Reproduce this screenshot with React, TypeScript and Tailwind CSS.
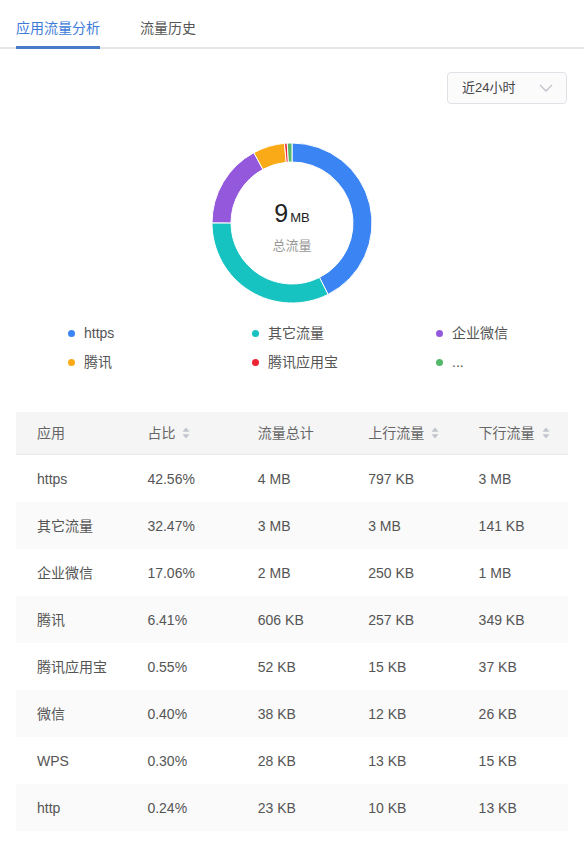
import React from "react";

const segs = [
  { name: "https", pct: 42.56, color: "#3b84f4" },
  { name: "其它流量", pct: 32.47, color: "#16c3c1" },
  { name: "企业微信", pct: 17.06, color: "#9458dd" },
  { name: "腾讯", pct: 6.41, color: "#faaa16" },
  { name: "腾讯应用宝", pct: 0.55, color: "#ec2433" },
  { name: "...", pct: 0.95, color: "#52b96a" },
];

function arcPath(cx: number, cy: number, R: number, r: number, a0: number, a1: number) {
  const p = (rad: number, a: number) => {
    const t = (a - 90) * (Math.PI / 180);
    return [cx + rad * Math.cos(t), cy + rad * Math.sin(t)];
  };
  const large = a1 - a0 > 180 ? 1 : 0;
  const [x0, y0] = p(R, a0);
  const [x1, y1] = p(R, a1);
  const [x2, y2] = p(r, a1);
  const [x3, y3] = p(r, a0);
  return `M${x0} ${y0} A${R} ${R} 0 ${large} 1 ${x1} ${y1} L${x2} ${y2} A${r} ${r} 0 ${large} 0 ${x3} ${y3} Z`;
}

function Donut() {
  const total = segs.reduce((s, x) => s + x.pct, 0);
  let acc = 0;
  return (
    <svg width="162" height="162" viewBox="0 0 162 162">
      {segs.map((s) => {
        const a0 = (acc / total) * 360;
        acc += s.pct;
        const a1 = (acc / total) * 360;
        return (
          <path
            key={s.name}
            d={arcPath(81, 81, 80, 61, a0, a1)}
            fill={s.color}
            stroke="#fff"
            strokeWidth="1"
          />
        );
      })}
    </svg>
  );
}

function Sort() {
  return (
    <svg width="8" height="12" viewBox="0 0 8 12" className="ml-[7px]">
      <path d="M4 0.5 L7.5 4.8 H0.5 Z" fill="#c0c4cc" />
      <path d="M4 11.5 L7.5 7.2 H0.5 Z" fill="#c0c4cc" />
    </svg>
  );
}

const rows = [
  ["https", "42.56%", "4 MB", "797 KB", "3 MB"],
  ["其它流量", "32.47%", "3 MB", "3 MB", "141 KB"],
  ["企业微信", "17.06%", "2 MB", "250 KB", "1 MB"],
  ["腾讯", "6.41%", "606 KB", "257 KB", "349 KB"],
  ["腾讯应用宝", "0.55%", "52 KB", "15 KB", "37 KB"],
  ["微信", "0.40%", "38 KB", "12 KB", "26 KB"],
  ["WPS", "0.30%", "28 KB", "13 KB", "15 KB"],
  ["http", "0.24%", "23 KB", "10 KB", "13 KB"],
];

const headers: [string, boolean][] = [
  ["应用", false],
  ["占比", true],
  ["流量总计", false],
  ["上行流量", true],
  ["下行流量", true],
];

export default function App() {
  return (
    <div
      className="w-[584px] min-h-[853px] bg-white text-[#333]"
      style={{ fontFamily: '"Liberation Sans", "Noto Sans CJK SC", sans-serif' }}
    >
      {/* Tabs */}
      <div className="flex h-[49px] items-stretch border-b-2 border-[#e6e6e6] pl-4">
        <div className="relative flex items-center text-[14px] text-[#3d7bd9] pt-[9px]">
          应用流量分析
          <div className="absolute left-0 right-0 bottom-[-2px] h-[3px] bg-[#4a7bc6]" />
        </div>
        <div className="ml-[40px] flex items-center text-[14px] text-[#555] pt-[9px]">流量历史</div>
      </div>

      <div className="px-4">
        {/* Select */}
        <div className="flex justify-end pt-[23px]">
          <div className="mr-[1px] flex h-[32px] w-[120px] items-center justify-between rounded-[4px] border border-[#dfe1e6] bg-[#fbfbfc] pl-[14px] pr-[13px] text-[13px] text-[#444]">
            <span>近24小时</span>
            <svg width="14" height="8" viewBox="0 0 14 8">
              <path d="M1 1 L7 7 L13 1" fill="none" stroke="#c0c4cc" strokeWidth="1.4" />
            </svg>
          </div>
        </div>

        {/* Donut */}
        <div className="mt-[38px] flex justify-center">
          <div className="relative h-[162px] w-[162px]">
            <Donut />
            <div className="absolute inset-0 flex flex-col items-center justify-center pt-[6px]">
              <div className="flex items-baseline text-[#222]">
                <span className="text-[25px] font-light leading-none">9</span>
                <span className="ml-[2px] text-[13px] leading-none">MB</span>
              </div>
              <div className="mt-[13px] text-[13px] text-[#999] leading-none">总流量</div>
            </div>
          </div>
        </div>

        {/* Legend */}
        <div className="mt-[20px] grid grid-cols-3 gap-y-[10px] text-[14px] text-[#555]">
          {segs.map((s) => (
            <div key={s.name} className="flex h-[19px] items-center pl-[52px]">
              <span className="h-[7px] w-[7px] rounded-full" style={{ background: s.color }} />
              <span className="ml-[9px]">{s.name}</span>
            </div>
          ))}
        </div>

        {/* Table */}
        <div className="mt-[40px] w-[552px] text-[14px]">
          <div className="grid h-[43px] grid-cols-5 items-center border-b border-[#e8e8e8] bg-[#f5f5f6] text-[#666]">
            {headers.map(([h, s]) => (
              <div key={h} className="flex items-center pl-[21px]">
                {h}
                {s && <Sort />}
              </div>
            ))}
          </div>
          {rows.map((r, i) => (
            <div
              key={r[0]}
              className={`grid h-[47px] grid-cols-5 items-center pt-[1px] text-[14px] text-[#555] ${i % 2 === 1 ? "bg-[#fafafa]" : "bg-white"}`}
            >
              {r.map((c, j) => (
                <div key={j} className="pl-[21px]">
                  {c}
                </div>
              ))}
            </div>
          ))}
        </div>
      </div>
    </div>
  );
}
